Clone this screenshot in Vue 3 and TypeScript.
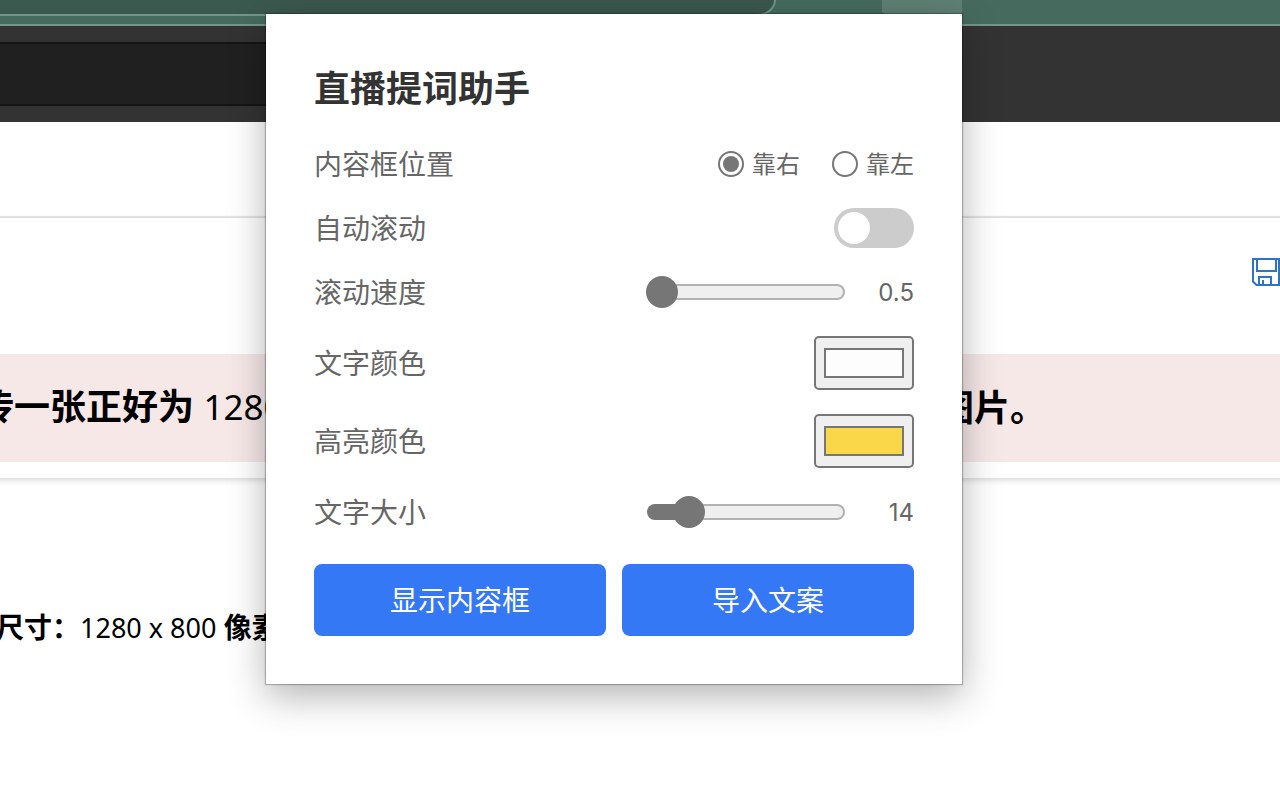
<script setup lang="ts">
import { computed, ref } from 'vue'

const position = ref<'right' | 'left'>('right')
const autoScroll = ref(false)
const speed = ref(0.5)
const textColor = ref('#fdfdfd')
const highlightColor = ref('#f9d749')
const fontSize = ref(14)

const speedFill = computed(() => `${((speed.value - 0.5) / 4.5) * 100}%`)
const sizeFill = computed(() => `${((fontSize.value - 12) / 12) * 100 + 5}%`)
</script>

<template>
  <div class="screen">
    <div class="browser-bar">
      <div class="address"></div>
      <div class="extension"></div>
    </div>

    <header class="site-header">
      <div class="search"></div>
    </header>

    <div class="subheader"></div>

    <section class="card">
      <div class="tools">
        <button class="save" type="button" aria-label="保存">
          <svg width="28" height="28" viewBox="0 0 28 28" fill="none" stroke="#2c74c4" stroke-width="2">
            <path d="M1 1H27V27H4.500L1 23.500Z" />
            <path d="M5 1V13H24V1" />
            <path d="M7 27V19H19V27M11 27V22" />
          </svg>
        </button>
      </div>
      <p class="banner">
        <span><b>传一张正好为</b> <span class="num">1280</span></span>
        <b>图片。</b>
      </p>
    </section>

    <p class="size"><b>尺寸：</b><span>1280 x 800</span> <b>像素</b></p>

    <form class="popup" @submit.prevent>
      <h1>直播提词助手</h1>

      <div class="rows">
        <div class="row" role="radiogroup" aria-labelledby="pos-label">
          <span id="pos-label" class="label">内容框位置</span>
          <div class="radios">
            <label><input v-model="position" type="radio" name="position" value="right" /><span>靠右</span></label>
            <label><input v-model="position" type="radio" name="position" value="left" /><span>靠左</span></label>
          </div>
        </div>

        <div class="row">
          <label class="label" for="auto">自动滚动</label>
          <input id="auto" v-model="autoScroll" class="switch" type="checkbox" />
        </div>

        <div class="row">
          <label class="label" for="speed">滚动速度</label>
          <div class="slider">
            <input id="speed" v-model.number="speed" type="range" min="0.5" max="5" step="0.5" :style="{ '--fill': speedFill }" />
            <output for="speed">{{ speed }}</output>
          </div>
        </div>

        <div class="row tall">
          <label class="label" for="text-color">文字颜色</label>
          <input id="text-color" v-model="textColor" class="color" type="color" />
        </div>

        <div class="row tall">
          <label class="label" for="hl-color">高亮颜色</label>
          <input id="hl-color" v-model="highlightColor" class="color" type="color" />
        </div>

        <div class="row">
          <label class="label" for="size">文字大小</label>
          <div class="slider">
            <input id="size" v-model.number="fontSize" type="range" min="12" max="24" step="1" :style="{ '--fill': sizeFill }" />
            <output for="size">{{ fontSize }}</output>
          </div>
        </div>
      </div>

      <div class="actions">
        <button type="button">显示内容框</button>
        <button type="button">导入文案</button>
      </div>
    </form>
  </div>
</template>

<style>
body {
  margin: 0;
  background: #fff;
}
</style>

<style scoped>
.screen {
  position: relative;
  min-height: 100vh;
  overflow: hidden;
  background: #fff;
  color: #000;
  font-family: "Noto Sans", "Noto Sans CJK SC", sans-serif;
}

.screen *,
.screen {
  box-sizing: border-box;
}

.browser-bar {
  display: flex;
  align-items: flex-start;
  height: 26px;
  background: #466b5e;
  border-bottom: 2px solid #73968a;
}

.address {
  width: 776px;
  height: 16px;
  background: #3b594e;
  border: solid #73968a;
  border-width: 0 2px 2px 0;
  border-bottom-right-radius: 28px 24px;
}

.extension {
  width: 80px;
  height: 14px;
  margin-left: 106px;
  background: #5f8074;
  border-bottom-left-radius: 4px;
}

.site-header {
  height: 96px;
  padding: 16px 0;
  background: #333;
}

.search {
  width: 50%;
  height: 64px;
  background: #202020;
  border: solid #141414;
  border-width: 2px 0;
}

.subheader {
  height: 96px;
  border-bottom: 2px solid #e8e8e8;
}

.card {
  margin: 0 -12px;
  padding: 0 12px 16px;
  box-shadow: 0 2px 6px rgba(0, 0, 0, 0.16);
}

.tools {
  display: flex;
  justify-content: flex-end;
  height: 136px;
  padding-top: 40px;
}

.save {
  width: 28px;
  height: 28px;
  padding: 0;
  border: 0;
  background: none;
}

.save svg {
  display: block;
}

.banner {
  display: grid;
  grid-template-columns: 960px 1fr;
  align-items: center;
  height: 108px;
  margin: 0 0 0 -22px;
  padding-bottom: 6px;
  background: #f7e8e8;
  font-size: 36px;
  line-height: 48px;
  white-space: nowrap;
}

b {
  font-family: "Noto Sans CJK SC", sans-serif;
  font-weight: 700;
}

.num {
  font-size: 35px;
}

.size {
  margin: 126px 0 0 -4px;
  font-size: 28px;
  line-height: 44px;
  white-space: nowrap;
}

.size span {
  font-size: 27px;
}

.popup {
  position: absolute;
  top: 14px;
  left: 266px;
  width: 696px;
  padding: 48px;
  background: #fff;
  box-shadow: 0 0 1px 1px rgba(0, 0, 0, 0.25), 0 12px 36px rgba(0, 0, 0, 0.3);
  font-family: Inter, "Noto Sans CJK SC", sans-serif;
  color: #666;
}

h1 {
  margin: 0 0 30px;
  padding-top: 2px;
  font-size: 36px;
  font-weight: 700;
  line-height: 50px;
  color: #333;
}

.rows {
  display: grid;
  gap: 24px;
}

.row {
  display: flex;
  align-items: center;
  justify-content: space-between;
  height: 40px;
}

.row.tall {
  height: 54px;
}

.label {
  padding-top: 2px;
  font-size: 28px;
  line-height: 40px;
}

input {
  appearance: none;
  margin: 0;
}

.radios {
  display: flex;
  gap: 32px;
}

.radios label {
  display: flex;
  align-items: center;
  gap: 8px;
  font-size: 24px;
  line-height: 36px;
}

.radios span {
  padding-top: 2px;
}

.radios input {
  width: 26px;
  height: 26px;
  padding: 3px;
  border: 2px solid #767676;
  border-radius: 50%;
  background: #fff;
}

.radios input:checked {
  background: #767676 content-box;
}

.switch {
  width: 80px;
  height: 40px;
  padding: 4px;
  border-radius: 20px;
  background: #ccc;
}

.switch::before {
  content: "";
  display: block;
  width: 32px;
  height: 32px;
  border-radius: 50%;
  background: #fff;
}

.switch:checked {
  background: #3478f6;
}

.switch:checked::before {
  margin-left: auto;
}

.slider {
  display: flex;
  align-items: center;
}

.slider input {
  width: 198px;
  height: 32px;
  background: none;
}

.slider input::-webkit-slider-runnable-track {
  box-sizing: border-box;
  height: 16px;
  border: 2px solid transparent;
  border-radius: 8px;
  background:
    linear-gradient(#767676, #767676) 0 0 / var(--fill) 100% no-repeat border-box,
    linear-gradient(#efefef, #efefef) padding-box,
    linear-gradient(#b2b2b2, #b2b2b2) border-box;
}

.slider input::-webkit-slider-thumb {
  appearance: none;
  width: 32px;
  height: 32px;
  margin: -10px 0 0 -3px;
  border-radius: 50%;
  background: #767676;
}

output {
  width: 69px;
  padding-top: 2px;
  font-size: 24px;
  line-height: 36px;
  text-align: right;
}

.color {
  width: 100px;
  height: 54px;
  padding: 10px 8px;
  border: 2px solid #767676;
  border-radius: 5px;
  background: #efefef;
}

.color::-webkit-color-swatch-wrapper {
  padding: 0;
}

.color::-webkit-color-swatch {
  border: 2px solid #767676;
  border-radius: 0;
}

.actions {
  display: grid;
  grid-template-columns: 1fr 1fr;
  gap: 16px;
  margin-top: 32px;
}

.actions button {
  height: 72px;
  padding: 2px 0 0;
  border: 0;
  border-radius: 8px;
  background: #3478f6;
  color: #fff;
  font: 400 28px/40px Inter, "Noto Sans CJK SC", sans-serif;
}
</style>
